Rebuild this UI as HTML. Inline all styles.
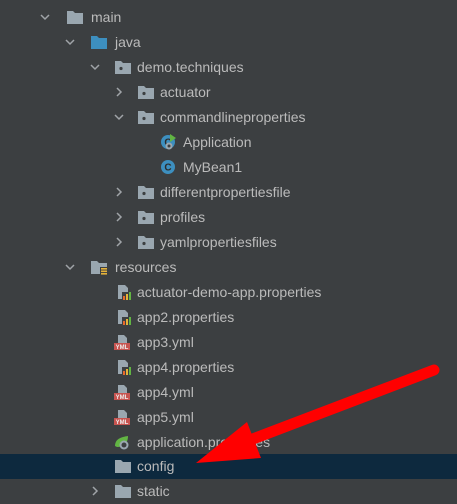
<!DOCTYPE html>
<html><head><meta charset="utf-8"><style>
body{margin:0;width:457px;height:503px;background:#3c3f41;overflow:hidden;position:relative;font-family:"Liberation Sans","DejaVu Sans",sans-serif;font-size:14px;color:#bbbbbb}
.r{position:absolute;left:0;width:457px;height:25px}
.sel{background:#0d293e}
.t{position:absolute;top:4px;line-height:17px;white-space:nowrap}
.c{position:absolute;top:7px}
.i{position:absolute;top:4px}
</style></head><body>
<svg width="0" height="0" style="position:absolute">
<defs>
<symbol id="down" viewBox="0 0 10 10"><polyline points="1,3 5,7 9,3" fill="none" stroke="#a0a4a8" stroke-width="1.5"/></symbol>
<symbol id="right" viewBox="0 0 10 10"><polyline points="3,1 7,5 3,9" fill="none" stroke="#a0a4a8" stroke-width="1.5"/></symbol>
<symbol id="fold" viewBox="0 0 18 16"><path d="M1 2h6l2 2h8v11H1z" fill="#9aa7b0"/></symbol>
<symbol id="foldb" viewBox="0 0 18 16"><path d="M1 2h6l2 2h8v11H1z" fill="#3d8fbf"/></symbol>
<symbol id="pkg" viewBox="0 0 18 16"><path d="M1 2h6l2 2h8v11H1z" fill="#9aa7b0"/><circle cx="7" cy="9.5" r="1.6" fill="#3c3f41"/></symbol>
<symbol id="res" viewBox="0 0 18 16"><path d="M1 2h6l2 2h8v11H1z" fill="#9aa7b0"/><rect x="10" y="8" width="7" height="8" fill="#3c3f41"/><rect x="11" y="9" width="6" height="1.6" fill="#e6b33a"/><rect x="11" y="11.5" width="6" height="1.6" fill="#e6b33a"/><rect x="11" y="14" width="6" height="1.6" fill="#e6b33a"/></symbol>
<symbol id="prop" viewBox="0 0 16 16"><path d="M3 1h7l3 3v11H3z" fill="#9aa7b0"/><rect x="7" y="8" width="9" height="8" fill="#3c3f41"/><rect x="8" y="12" width="2" height="4" fill="#e66a2c"/><rect x="11" y="10" width="2" height="6" fill="#e6b33a"/><rect x="14" y="8" width="2" height="8" fill="#62b543"/></symbol>
<symbol id="yml" viewBox="0 0 16 16"><path d="M4 1h6l3 3v5H4z" fill="#9aa7b0"/><rect x="0" y="9" width="16" height="7" fill="#c75450"/><text x="8" y="15" font-size="6" font-family="Liberation Sans" fill="#eee" text-anchor="middle" font-weight="bold">YML</text></symbol>
<symbol id="cls" viewBox="0 0 16 16"><circle cx="8" cy="8" r="7" fill="#3d8fbf"/><text x="8" y="11.5" font-size="10" font-family="Liberation Sans" fill="#2b2b2b" text-anchor="middle" font-weight="bold">C</text></symbol>
<symbol id="app" viewBox="0 0 16 16"><circle cx="8" cy="8" r="7" fill="#3d8fbf"/><text x="8" y="11.5" font-size="10" font-family="Liberation Sans" fill="#2b2b2b" text-anchor="middle" font-weight="bold">C</text><path d="M10 0l6 4-6 4z" fill="#62b543"/><circle cx="9" cy="12" r="3.5" fill="#9aa7b0"/><circle cx="9" cy="12" r="1.5" fill="#3c3f41"/></symbol>
<symbol id="spr" viewBox="0 0 16 16"><path d="M1 12C1 5 7 3 14 2c0 7-4 11-11 11z" fill="#62b543"/><circle cx="10" cy="11" r="4.5" fill="#9aa7b0"/><circle cx="10" cy="11" r="2.5" fill="#3c3f41"/></symbol>
</defs></svg>

<div class="r" style="top:5px"><svg class="c" style="left:40px" width="10" height="10"><use href="#down"/></svg><svg class="i" style="left:66px" width="18" height="16"><use href="#fold"/></svg><span class="t" style="left:91px">main</span></div>
<div class="r" style="top:30px"><svg class="c" style="left:65px" width="10" height="10"><use href="#down"/></svg><svg class="i" style="left:90px" width="18" height="16"><use href="#foldb"/></svg><span class="t" style="left:115px">java</span></div>
<div class="r" style="top:55px"><svg class="c" style="left:90px" width="10" height="10"><use href="#down"/></svg><svg class="i" style="left:114px" width="18" height="16"><use href="#pkg"/></svg><span class="t" style="left:137px">demo.techniques</span></div>
<div class="r" style="top:80px"><svg class="c" style="left:114px" width="10" height="10"><use href="#right"/></svg><svg class="i" style="left:137px" width="18" height="16"><use href="#pkg"/></svg><span class="t" style="left:160px">actuator</span></div>
<div class="r" style="top:105px"><svg class="c" style="left:114px" width="10" height="10"><use href="#down"/></svg><svg class="i" style="left:137px" width="18" height="16"><use href="#pkg"/></svg><span class="t" style="left:160px">commandlineproperties</span></div>
<div class="r" style="top:130px"><svg class="i" style="left:160px" width="16" height="16"><use href="#app"/></svg><span class="t" style="left:183px">Application</span></div>
<div class="r" style="top:155px"><svg class="i" style="left:160px" width="16" height="16"><use href="#cls"/></svg><span class="t" style="left:183px">MyBean1</span></div>
<div class="r" style="top:180px"><svg class="c" style="left:114px" width="10" height="10"><use href="#right"/></svg><svg class="i" style="left:137px" width="18" height="16"><use href="#pkg"/></svg><span class="t" style="left:160px">differentpropertiesfile</span></div>
<div class="r" style="top:205px"><svg class="c" style="left:114px" width="10" height="10"><use href="#right"/></svg><svg class="i" style="left:137px" width="18" height="16"><use href="#pkg"/></svg><span class="t" style="left:160px">profiles</span></div>
<div class="r" style="top:230px"><svg class="c" style="left:114px" width="10" height="10"><use href="#right"/></svg><svg class="i" style="left:137px" width="18" height="16"><use href="#pkg"/></svg><span class="t" style="left:160px">yamlpropertiesfiles</span></div>
<div class="r" style="top:255px"><svg class="c" style="left:65px" width="10" height="10"><use href="#down"/></svg><svg class="i" style="left:90px" width="18" height="16"><use href="#res"/></svg><span class="t" style="left:115px">resources</span></div>
<div class="r" style="top:280px"><svg class="i" style="left:115px" width="16" height="16"><use href="#prop"/></svg><span class="t" style="left:137px">actuator-demo-app.properties</span></div>
<div class="r" style="top:305px"><svg class="i" style="left:115px" width="16" height="16"><use href="#prop"/></svg><span class="t" style="left:137px">app2.properties</span></div>
<div class="r" style="top:330px"><svg class="i" style="left:114px" width="16" height="16"><use href="#yml"/></svg><span class="t" style="left:137px">app3.yml</span></div>
<div class="r" style="top:355px"><svg class="i" style="left:115px" width="16" height="16"><use href="#prop"/></svg><span class="t" style="left:137px">app4.properties</span></div>
<div class="r" style="top:380px"><svg class="i" style="left:114px" width="16" height="16"><use href="#yml"/></svg><span class="t" style="left:137px">app4.yml</span></div>
<div class="r" style="top:405px"><svg class="i" style="left:114px" width="16" height="16"><use href="#yml"/></svg><span class="t" style="left:137px">app5.yml</span></div>
<div class="r" style="top:430px"><svg class="i" style="left:114px" width="16" height="16"><use href="#spr"/></svg><span class="t" style="left:137px">application.properties</span></div>
<div class="r sel" style="top:454px"><svg class="i" style="left:114px" width="18" height="16"><use href="#fold"/></svg><span class="t" style="left:137px">config</span></div>
<div class="r" style="top:479px"><svg class="c" style="left:90px" width="10" height="10"><use href="#right"/></svg><svg class="i" style="left:114px" width="18" height="16"><use href="#fold"/></svg><span class="t" style="left:137px">static</span></div>

<svg style="position:absolute;left:0;top:0" width="457" height="503">
<line x1="434" y1="370" x2="245" y2="442" stroke="#ff0000" stroke-width="11" stroke-linecap="round"/>
<polygon points="196,463 247,422 261,458" fill="#ff0000"/>
</svg>
</body></html>
